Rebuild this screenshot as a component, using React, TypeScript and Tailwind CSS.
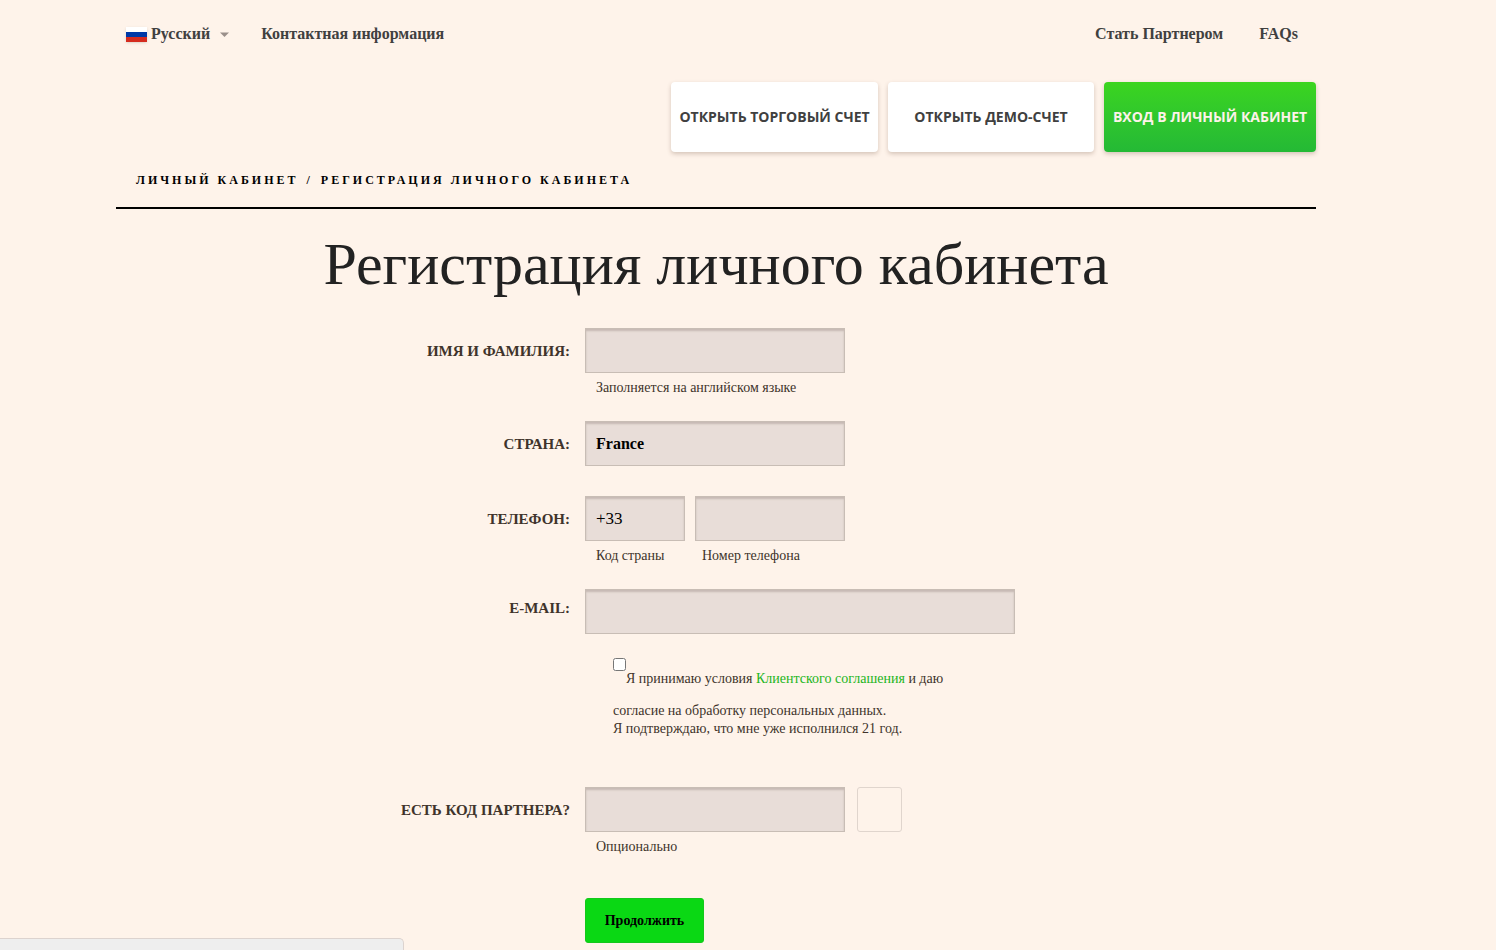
import React from 'react';

interface FieldProps {
    label: string;
    htmlFor: string;
    className?: string;
    labelHeight?: string;
    children: React.ReactNode;
}

const inputClass =
    'h-[45px] border border-[#c8bdb5] bg-[#e8ddd8] px-2.5 text-black outline-none shadow-[inset_0_2px_2px_rgba(100,80,70,0.25)]';
const hintClass = 'block pt-1.5 pl-[11px] text-sm leading-[18px]';
const actionClass =
    "flex h-[70px] items-center justify-center rounded px-2 font-['Open_Sans',sans-serif] text-sm font-bold uppercase whitespace-nowrap shadow-[0_2px_4px_rgba(90,60,40,0.25)]";

const Field: React.FC<FieldProps> = ({ label, htmlFor, className = '', labelHeight = 'h-[47px]', children }) => (
    <div className={`flex gap-[15px] ${className}`}>
        <label
            htmlFor={htmlFor}
            className={`flex w-[454px] shrink-0 items-center justify-end text-[15px] font-bold uppercase ${labelHeight}`}
        >
            {label}
        </label>
        <div>{children}</div>
    </div>
);

const RussianFlag = () => (
    <svg width="21" height="15" viewBox="0 0 21 15" className="mr-1 shadow-sm" aria-hidden="true">
        <rect width="21" height="5" fill="#fff" />
        <rect y="5" width="21" height="5" fill="#0039a6" />
        <rect y="10" width="21" height="5" fill="#d52b1e" />
    </svg>
);

const TopNav = () => (
    <nav className="flex h-[68px] items-center justify-between pr-[18px] pl-2.5 text-base font-bold text-[#404040]">
        <div className="flex items-center gap-8">
            <button type="button" className="flex items-center">
                <RussianFlag />
                Русский
                <svg width="9" height="5" viewBox="0 0 9 5" className="ml-2.5" aria-hidden="true">
                    <path d="M0 0.5h9L4.5 5z" fill="#9a8f8a" />
                </svg>
            </button>
            <a href="#contacts">Контактная информация</a>
        </div>
        <div className="flex gap-9">
            <a href="#partner">Стать Партнером</a>
            <a href="#faqs">FAQs</a>
        </div>
    </nav>
);

const Actions = () => (
    <div className="mt-3.5 flex justify-end gap-2.5">
        <a href="#account" className={`${actionClass} w-[207px] bg-white text-[#404040]`}>
            Открыть торговый счет
        </a>
        <a href="#demo" className={`${actionClass} w-[206px] bg-white text-[#404040]`}>
            Открыть демо-счет
        </a>
        <a href="#login" className={`${actionClass} w-[212px] bg-linear-to-b from-[#3bd51f] to-[#24b935] text-[#fdf2e9]`}>
            Вход в личный кабинет
        </a>
    </div>
);

const RegistrationForm = () => (
    <form className="text-[#40332b]" onSubmit={(e) => e.preventDefault()}>
        <Field label="Имя и фамилия:" htmlFor="name" className="mb-6">
            <input id="name" type="text" className={`${inputClass} w-[260px] text-[17px]`} />
            <span className={hintClass}>Заполняется на английском языке</span>
        </Field>

        <Field label="Страна:" htmlFor="country" className="mb-7">
            <select id="country" className={`${inputClass} w-[260px] appearance-none text-base font-bold`}>
                <option>France</option>
            </select>
        </Field>

        <Field label="Телефон:" htmlFor="phone" className="mb-6">
            <div className="flex gap-2.5">
                <div className="w-[100px]">
                    <input id="code" type="text" defaultValue="+33" className={`${inputClass} w-full text-[17px]`} />
                    <label htmlFor="code" className={hintClass}>Код страны</label>
                </div>
                <div className="w-[150px]">
                    <input id="phone" type="tel" className={`${inputClass} w-full text-[17px]`} />
                    <label htmlFor="phone" className={`${hintClass} -ml-1`}>Номер телефона</label>
                </div>
            </div>
        </Field>

        <Field label="E-mail:" htmlFor="email" labelHeight="h-[39px]">
            <input id="email" type="email" className={`${inputClass} w-[430px] text-[17px]`} />
        </Field>

        {/* Agreement */}
        <div className="mt-6 ml-[497px] w-[345px] text-sm leading-[18px]">
            <div className="flex">
                <input id="agree" type="checkbox" className="size-[13px] shrink-0" />
                <label htmlFor="agree" className="mt-3 whitespace-nowrap">
                    Я принимаю условия{' '}
                    <a href="#agreement" className="text-[#1db522]">Клиентского соглашения</a> и даю
                </label>
            </div>
            <p className="mt-3.5">согласие на обработку персональных данных.</p>
            <p>Я подтверждаю, что мне уже исполнился 21 год.</p>
        </div>

        <Field label="Есть код партнера?" htmlFor="partner" className="mt-[49px]">
            <div className="flex gap-3">
                <input id="partner" type="text" className={`${inputClass} w-[260px] text-[17px]`} />
                <button type="button" aria-label="Проверить код" className="size-[45px] rounded-[3px] border border-[#e0d5cd]" />
            </div>
            <span className={hintClass}>Опционально</span>
        </Field>

        <button
            type="submit"
            className="mt-[42px] ml-[469px] h-[45px] w-[119px] rounded-[3px] border border-[#14c81c] bg-[#0ad814] text-sm font-bold text-black"
        >
            Продолжить
        </button>
    </form>
);

const App = () => {
    return (
        <div className="min-h-screen bg-[#fef3ea] pr-16 font-['Liberation_Serif',serif]">
            <div className="mx-auto max-w-[1200px]">
                <TopNav />
                <Actions />

                {/* Breadcrumbs */}
                <div className="flex h-[57px] items-center gap-2 border-b-2 border-black pl-5 text-xs font-bold tracking-[3px] text-black uppercase">
                    <a href="#cabinet">Личный кабинет</a>
                    <span>/</span>
                    <span>Регистрация личного кабинета</span>
                </div>

                <h1 className="pt-[25px] pb-[34px] text-center text-[60px] leading-[60px] text-[#222]">
                    Регистрация личного кабинета
                </h1>

                <RegistrationForm />
            </div>

            {/* Collapsed chat panel */}
            <div className="fixed bottom-0 left-0 h-3 w-[404px] rounded-tr-[5px] border-t border-r border-[#dcd3cf] bg-[#eee]" />
        </div>
    );
};

export default App;
